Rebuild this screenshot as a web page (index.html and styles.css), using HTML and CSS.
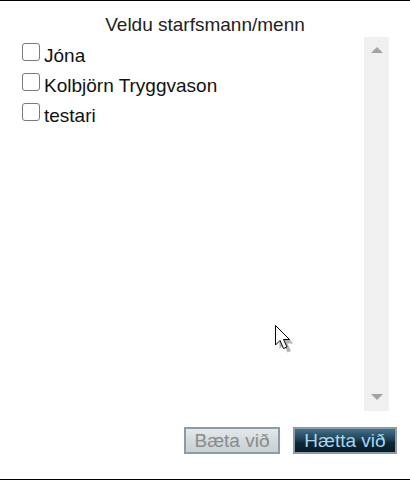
FILE: index.html
```html
<!DOCTYPE html>
<html lang="is">
<head>
<meta charset="utf-8">
<title>Veldu starfsmann</title>
<link rel="stylesheet" href="styles.css">
</head>
<body>
<div class="frame">
  <div class="title">Veldu starfsmann/menn</div>
  <div class="listbox">
    <div class="items">
      <label class="item"><input type="checkbox" class="cb"><span>Jóna</span></label>
      <label class="item"><input type="checkbox" class="cb"><span>Kolbjörn Tryggvason</span></label>
      <label class="item"><input type="checkbox" class="cb"><span>testari</span></label>
    </div>
    <div class="scrollbar">
      <span class="arrow up"></span>
      <span class="arrow down"></span>
    </div>
  </div>
  <div class="actions">
    <button class="btn btn-add" disabled>Bæta við</button>
    <button class="btn btn-cancel">Hætta við</button>
  </div>
  <svg class="cursor" width="22" height="28" viewBox="0 0 22 28">
    <path d="M2.5 2.5 L2.5 22 L7 17.5 L10.5 25.5 L14 24 L10.5 16.5 L16.5 16.5 Z" fill="#b4b4b4" transform="translate(2,2)"/>
    <path d="M0.5 0.5 L0.5 20 L5 15.5 L8.5 23.5 L12 22 L8.5 14.5 L14.5 14.5 Z" fill="#fff" stroke="#000" stroke-width="1" stroke-linejoin="miter"/>
  </svg>
</div>
</body>
</html>
```
FILE: styles.css
```css
html, body {
  margin: 0;
  padding: 0;
  background: #fff;
}
body {
  font-family: "Liberation Sans", Arial, sans-serif;
  font-size: 19px;
  color: #1a1a1a;
}
.frame {
  position: relative;
  width: 410px;
  height: 478px;
  border-top: 1px solid #000;
  border-bottom: 1px solid #000;
  display: flex;
  flex-direction: column;
}
.title {
  margin-top: 13px;
  line-height: 22px;
  height: 22px;
  text-align: center;
  color: #222;
}
.listbox {
  margin-top: 1px;
  margin-left: 18px;
  width: 371px;
  height: 374px;
  display: flex;
}
.items {
  flex: 1;
  padding-top: 4px;
  padding-left: 4px;
  display: flex;
  flex-direction: column;
}
.item {
  display: flex;
  align-items: flex-start;
  height: 30px;
  line-height: 30px;
  color: #111;
}
.cb {
  appearance: none;
  -webkit-appearance: none;
  width: 18px;
  height: 18px;
  margin: 2px 4px 0 0;
  border: 1px solid #7a7a7a;
  border-radius: 3px;
  background: #fff;
  box-sizing: border-box;
}
.scrollbar {
  width: 25px;
  background: #f0f0f0;
  display: flex;
  flex-direction: column;
  justify-content: space-between;
  align-items: center;
  padding: 10px 0 11px;
  box-sizing: border-box;
}
.arrow {
  width: 0;
  height: 0;
  border-left: 6px solid transparent;
  border-right: 6px solid transparent;
}
.arrow.up {
  border-bottom: 6px solid #a3a3a3;
}
.arrow.down {
  border-top: 6px solid #a3a3a3;
}
.actions {
  margin-top: 16px;
  padding-right: 13px;
  display: flex;
  justify-content: flex-end;
  gap: 13px;
}
.btn {
  font-family: "Liberation Sans", Arial, sans-serif;
  font-size: 19px;
  line-height: 21px;
  height: 27px;
  padding: 1px 0;
  border: 2px solid #8c9ba5;
  border-radius: 0;
  box-sizing: border-box;
  text-align: center;
}
.btn-add {
  width: 96px;
  color: #8a8a8a;
  background: linear-gradient(to bottom, #e4e9eb 0%, #d3dadd 50%, #c9d1d5 100%);
}
.btn-cancel {
  width: 104px;
  color: #a8d4ee;
  background: linear-gradient(to bottom, #42708a 0%, #1d4256 45%, #0c2735 60%, #071d28 100%);
}
.cursor {
  position: absolute;
  left: 275px;
  top: 324px;
}
```
